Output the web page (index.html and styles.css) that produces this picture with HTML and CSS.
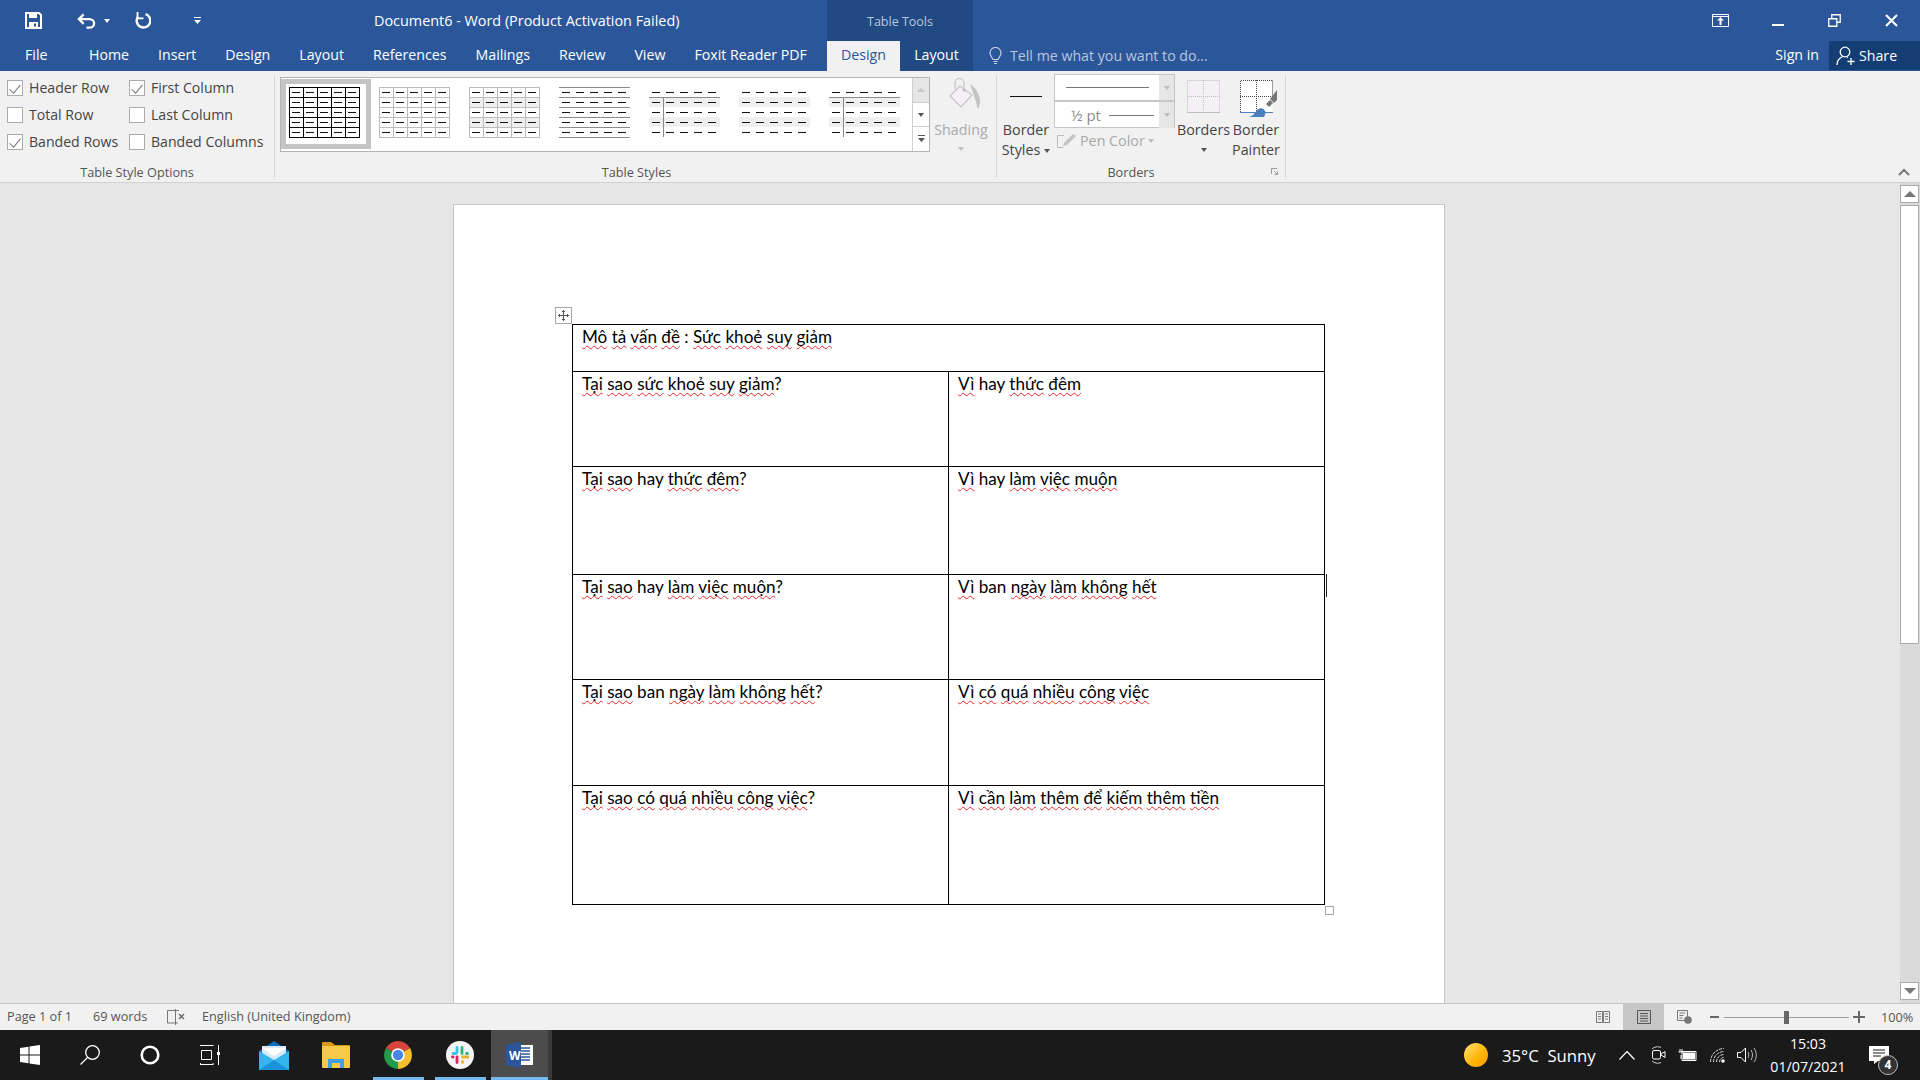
FILE: index.html
```html
<!DOCTYPE html>
<html lang="vi">
<head>
    <meta charset="UTF-8">
    <title>Document6 - Word (Product Activation Failed)</title>
    <link rel="stylesheet" href="styles.css">
</head>
<body>

    <!-- shared parts of the table style thumbnails -->
    <svg class="defs" aria-hidden="true">
        <defs>
            <pattern id="dash" width="14" height="10" patternUnits="userSpaceOnUse"><rect x="3" y="5" width="8" height="1" fill="#111"/></pattern>
            <pattern id="band" width="71" height="20" patternUnits="userSpaceOnUse"><rect y="10" width="71" height="10" fill="#efefef"/></pattern>
            <g id="dashes"><rect x="1" y="0" width="70" height="51" fill="url(#dash)"/></g>
            <g id="bands"><rect y="0" width="71" height="50" fill="url(#band)"/></g>
            <path id="gridlines" d="M.5 0v51M14.5 0v51M28.5 0v51M42.5 0v51M56.5 0v51M70.5 0v51M0 .5h71M0 10.5h71M0 20.5h71M0 30.5h71M0 40.5h71M0 50.5h71"/>
        </defs>
    </svg>

    <!-- title bar and tabs -->
    <header class="titlebar">
        <div class="title-row">
            <div class="qat">
                <svg class="qat-save" width="17" height="17" viewBox="0 0 17 17"><path d="M1 1h13l2 2v13H1z" fill="none" stroke="#fff" stroke-width="2"/><rect x="4" y="1" width="8" height="5" fill="#fff"/><rect x="4" y="10" width="9" height="6" fill="#fff"/><rect x="9" y="11.5" width="2" height="3" fill="#2b579a"/></svg>
                <svg class="qat-undo" width="19" height="16" viewBox="0 0 20 16"><path d="M3 6h10a5 4.500 0 0 1 0 9h-3" fill="none" stroke="#fff" stroke-width="2.400"/><path d="M7 1 2 6l5 5" fill="none" stroke="#fff" stroke-width="2.400"/></svg>
                <span class="caret caret-undo"></span>
                <svg class="qat-redo" width="17" height="17" viewBox="0 0 17 17"><path d="M11.500 2.200a6.800 6.800 0 1 1-7.500 2.500" fill="none" stroke="#fff" stroke-width="2.400"/><path d="M3.500 0v6.300h6" fill="none" stroke="#fff" stroke-width="1.800"/></svg>
                <svg class="qat-more" width="7" height="8" viewBox="0 0 7 8"><path d="M0 0h7v1H0zM0 3h7L3.500 7z" fill="#fff"/></svg>
            </div>
            <div class="doc-title">Document6 - Word (Product Activation Failed)</div>
            <div class="tools-label">Table Tools</div>
            <div class="window-btns">
                <span class="win-btn"><svg width="17" height="13" viewBox="0 0 17 13"><path d="M.5.500h16v12H.5zM0 2.500h17" fill="none" stroke="#fff"/><path d="M8.500 3 5 6.500h2.500V11h2V6.500H12z" fill="#fff"/></svg></span>
                <span class="win-btn"><svg width="12" height="12" viewBox="0 0 12 12"><rect y="9" width="12" height="2" fill="#fff"/></svg></span>
                <span class="win-btn"><svg width="13" height="13" viewBox="0 0 13 13"><path d="M.750 4.750h8v7.500h-8zM3.750 4.500V.750h8.500v7.500H9" fill="none" stroke="#fff" stroke-width="1.300"/></svg></span>
                <span class="win-btn"><svg width="13" height="13" viewBox="0 0 13 13"><path d="m1 1 11 11M12 1 1 12" stroke="#fff" stroke-width="2"/></svg></span>
            </div>
        </div>
        <nav class="tab-row">
            <div class="tabs-main">
                <span class="tab tab-file">File</span>
                <span class="tab">Home</span>
                <span class="tab">Insert</span>
                <span class="tab">Design</span>
                <span class="tab">Layout</span>
                <span class="tab">References</span>
                <span class="tab">Mailings</span>
                <span class="tab">Review</span>
                <span class="tab">View</span>
                <span class="tab">Foxit Reader PDF</span>
            </div>
            <span class="tab tab-active">Design</span>
            <span class="tab tab-context">Layout</span>
            <div class="tell-me">
                <svg width="13" height="18" viewBox="0 0 13 18"><path d="M4 12.500C3.500 10 1 9.500 1 6a5.500 5.500 0 0 1 11 0c0 3.500-2.500 4-3 6.500z" fill="none" stroke="#c3cfe2" stroke-width="1.200"/><path d="M4.500 14.500h4M5 16.500h3" stroke="#c3cfe2" stroke-width="1.200"/></svg>
                <span>Tell me what you want to do...</span>
            </div>
            <span class="sign-in">Sign in</span>
            <div class="share">
                <svg width="20" height="20" viewBox="0 0 20 20"><circle cx="9" cy="6" r="4.800" fill="none" stroke="#fff" stroke-width="1.300"/><path d="M1 19c0-4 2.500-7 5.500-8.500M11 11l1 .5" fill="none" stroke="#fff" stroke-width="1.300"/><path d="M15 12v7M11.500 15.500h7" stroke="#fff" stroke-width="1.300"/></svg>
                <span>Share</span>
            </div>
        </nav>
    </header>

    <!-- ribbon -->
    <section class="ribbon">
        <div class="group group-options">
            <div class="options-grid">
                <label class="check"><span class="box on"></span>Header Row</label>
                <label class="check"><span class="box on"></span>First Column</label>
                <label class="check"><span class="box"></span>Total Row</label>
                <label class="check"><span class="box"></span>Last Column</label>
                <label class="check"><span class="box on"></span>Banded Rows</label>
                <label class="check"><span class="box"></span>Banded Columns</label>
            </div>
            <div class="group-label">Table Style Options</div>
        </div>

        <div class="group group-styles">
            <div class="styles-row">
                <div class="gallery">
                    <div class="thumbs">
                        <span class="thumb thumb-selected"><svg width="71" height="51" viewBox="0 0 71 51"><use href="#gridlines" stroke="#000"/><use href="#dashes"/></svg></span>
                        <span class="thumb"><svg width="71" height="51" viewBox="0 0 71 51"><use href="#gridlines" stroke="#bcbcbc"/><use href="#dashes"/></svg></span>
                        <span class="thumb"><svg width="71" height="51" viewBox="0 0 71 51"><use href="#bands"/><use href="#gridlines" stroke="#bcbcbc"/><use href="#dashes"/></svg></span>
                        <span class="thumb"><svg width="71" height="51" viewBox="0 0 71 51"><path d="M0 .5h71M0 10.500h71M0 20.500h71M0 30.500h71M0 40.500h71M0 50.500h71" stroke="#8a8a8a"/><use href="#dashes"/></svg></span>
                        <span class="thumb"><svg width="71" height="51" viewBox="0 0 71 51"><use href="#bands"/><path d="M0 10.500h71M14.500 10v40" stroke="#8a8a8a"/><use href="#dashes"/></svg></span>
                        <span class="thumb"><svg width="71" height="51" viewBox="0 0 71 51"><use href="#bands"/><use href="#dashes"/></svg></span>
                        <span class="thumb"><svg width="71" height="51" viewBox="0 0 71 51"><use href="#bands"/><path d="M0 10.500h71M14.500 10v40" stroke="#8a8a8a"/><use href="#dashes"/></svg></span>
                    </div>
                    <div class="gallery-scroll">
                        <span class="gs-btn gs-up"><i class="tri-up"></i></span>
                        <span class="gs-btn"><i class="caret"></i></span>
                        <span class="gs-btn gs-more"><svg width="7" height="8" viewBox="0 0 7 8"><path d="M0 0h7v1H0zM0 3h7L3.500 7z" fill="#555"/></svg></span>
                    </div>
                </div>
                <div class="shading">
                    <svg class="shading-icon" width="32" height="32" viewBox="0 0 32 32"><path d="M11 9 1 19l11 11 11-12z" fill="#f5f0f6" stroke="#c4c4c4" stroke-width="1.200"/><path d="M6 12V6a4.500 4.500 0 0 1 9 0v6" fill="none" stroke="#c4c4c4" stroke-width="1.200"/><circle cx="15" cy="13" r="1.500" fill="#bbb"/><path d="M21 7c5 3 9 9 10 16 .5 3-1 8-2 8-1.500 0-1-5-3-9z" fill="#c4c4c4"/></svg>
                    <span class="btn-text muted">Shading</span>
                    <i class="caret caret-muted"></i>
                </div>
            </div>
            <div class="group-label">Table Styles</div>
        </div>

        <div class="group group-borders">
            <div class="borders-row">
                <div class="big-btn btn-styles">
                    <span class="line-sample"></span>
                    <span class="btn-text">Border</span>
                    <span class="btn-text">Styles<i class="caret caret-inline"></i></span>
                </div>
                <div class="pen-col">
                    <div class="pen-box">
                        <div class="pen-row pen-row-top">
                            <span class="pen-value"><span class="pen-line pen-line-long"></span></span>
                            <span class="pen-arrow"><i class="caret caret-muted"></i></span>
                        </div>
                        <div class="pen-row">
                            <span class="pen-value"><span class="pen-weight">½ pt</span><span class="pen-line"></span></span>
                            <span class="pen-arrow"><i class="caret caret-muted"></i></span>
                        </div>
                    </div>
                    <div class="pen-color">
                        <svg width="20" height="14" viewBox="0 0 20 14"><path d="M7 1.500H.5v12h6" fill="none" stroke="#bdbdbd"/><path d="m6 12 1-3 9-9 3 2-9 9z" fill="#c4c4c4"/></svg>
                        <span class="muted">Pen Color</span>
                        <i class="caret caret-muted"></i>
                    </div>
                </div>
                <div class="big-btn btn-borders">
                    <svg class="btn-icon" width="33" height="33" viewBox="0 0 33 33"><rect x=".5" y=".5" width="32" height="32" fill="#f5f0f6"/><path d="M.5.500h32v32H.5zM16.500 0v33M0 16.500h33" fill="none" stroke="#bdbdbd" stroke-dasharray="1 1"/><path d="M0 32.500h33" stroke="#bdbdbd"/></svg>
                    <span class="btn-text">Borders</span>
                    <i class="caret"></i>
                </div>
                <div class="big-btn btn-painter">
                    <svg class="btn-icon" width="38" height="38" viewBox="0 0 38 38"><rect x=".5" y=".5" width="32" height="32" fill="#fff"/><path d="M.5 32V.5h32M32.500 .5v18M16.500 0v32M0 16.500h33" fill="none" stroke="#444" stroke-dasharray="1 1"/><path d="M0 32.500h33" stroke="#4a80bd"/><path d="M9 37c4-1 6-4 8-7 3-3 7-2 8 1 1 3-1 6-1 6z" fill="#4a80bd"/><path d="m26 24 4-4 3 3-4 4z" fill="#777"/><path d="m30 19 7-9v10l-3 3z" fill="#777"/></svg>
                    <span class="btn-text">Border</span>
                    <span class="btn-text">Painter</span>
                </div>
            </div>
            <div class="group-label">Borders</div>
            <svg class="launcher" width="7" height="7" viewBox="0 0 7 7"><path d="M.5 6V.5H6M3 3l3.500 3.500M6.500 3.500v3h-3" fill="none" stroke="#9a9a9a"/></svg>
        </div>

        <svg class="collapse" width="12" height="8" viewBox="0 0 12 8"><path d="m1 7 5-5 5 5" fill="none" stroke="#777" stroke-width="2"/></svg>
    </section>

    <!-- document -->
    <main class="doc-area">
        <div class="canvas">
            <div class="page">
                <div class="table-wrap">
                    <span class="move-handle"><svg width="11" height="11" viewBox="0 0 11 11"><path d="M5.500 0v11M0 5.500h11M4 1.500h3M4 9.500h3M1.500 4v3M9.500 4v3" stroke="#555"/></svg></span>
                    <table class="doc-table">
                        <tr class="r0">
                            <td colspan="2"><u>Mô</u> <u>tả</u> <u>vấn</u> <u>đề</u> : <u>Sức</u> <u>khoẻ</u> <u>suy</u> <u>giảm</u></td>
                        </tr>
                        <tr class="r1">
                            <td><u>Tại</u> <u>sao</u> <u>sức</u> <u>khoẻ</u> <u>suy</u> <u>giảm</u>?</td>
                            <td><u>Vì</u> hay <u>thức</u> <u>đêm</u></td>
                        </tr>
                        <tr class="r2">
                            <td><u>Tại</u> <u>sao</u> hay <u>thức</u> <u>đêm</u>?</td>
                            <td><u>Vì</u> hay <u>làm</u> <u>việc</u> <u>muộn</u></td>
                        </tr>
                        <tr class="r3">
                            <td><u>Tại</u> <u>sao</u> hay <u>làm</u> <u>việc</u> <u>muộn</u>?</td>
                            <td><u>Vì</u> ban <u>ngày</u> <u>làm</u> <u>không</u> <u>hết</u></td>
                        </tr>
                        <tr class="r4">
                            <td><u>Tại</u> <u>sao</u> ban <u>ngày</u> <u>làm</u> <u>không</u> <u>hết</u>?</td>
                            <td><u>Vì</u> <u>có</u> <u>quá</u> <u>nhiều</u> <u>công</u> <u>việc</u></td>
                        </tr>
                        <tr class="r5">
                            <td><u>Tại</u> <u>sao</u> <u>có</u> <u>quá</u> <u>nhiều</u> <u>công</u> <u>việc</u>?</td>
                            <td><u>Vì</u> <u>cần</u> <u>làm</u> <u>thêm</u> <u>để</u> <u>kiếm</u> <u>thêm</u> <u>tiền</u></td>
                        </tr>
                    </table>
                    <span class="row-mark"></span>
                    <span class="size-handle"></span>
                </div>
            </div>
        </div>
        <div class="scrollbar">
            <span class="sb-btn"><i class="tri-up tri-dark"></i></span>
            <span class="sb-thumb"></span>
            <span class="sb-btn sb-down"><i class="tri-down"></i></span>
        </div>
    </main>

    <!-- status bar -->
    <footer class="statusbar">
        <span class="st-page">Page 1 of 1</span>
        <span class="st-words">69 words</span>
        <svg class="st-proof" width="18" height="16" viewBox="0 0 18 16"><path d="M8.500 14H.5V1.500h8zM8.500 1.500H12M8.500 14H11M8.500 0v16" fill="none" stroke="#777"/><path d="m12 5 5 5M17 5l-5 5" stroke="#666" stroke-width="1.400"/></svg>
        <span class="st-lang">English (United Kingdom)</span>
        <div class="st-right">
            <span class="view-btn view-read"><svg width="14" height="14" viewBox="0 0 14 14"><path d="M.5 1.500h6v11h-6zM7.500 1.500h6v11h-6zM2 4h3M2 6.500h3M2 9h3M9 4h3M9 6.500h3M9 9h3" fill="none" stroke="#777"/></svg></span>
            <span class="view-btn view-print"><svg width="14" height="14" viewBox="0 0 14 14"><path d="M.5.500h13v13H.5zM3 3.500h8M3 6h8M3 8.500h8M3 11h8" fill="none" stroke="#555"/></svg></span>
            <span class="view-btn view-web"><svg width="15" height="14" viewBox="0 0 15 14"><path d="M.5.500h10v10H.5zM2.500 3h6M2.500 5.500h4M2.500 8h3" fill="none" stroke="#777"/><circle cx="11" cy="10" r="3.800" fill="#777"/></svg></span>
            <span class="zoom-minus"></span>
            <span class="zoom-track"><span class="zoom-thumb"></span></span>
            <span class="zoom-plus"></span>
            <span class="zoom-value">100%</span>
        </div>
    </footer>

    <!-- windows taskbar -->
    <div class="taskbar">
        <span class="tb-slot"><svg width="20" height="20" viewBox="0 0 20 20"><path d="M0 3 8.500 1.800V9.500H0zM9.500 1.600 20 0v9.500H9.500zM0 10.500h8.500v7.700L0 17zM9.500 10.500H20V20L9.500 18.400z" fill="#fff"/></svg></span>
        <span class="tb-slot"><svg width="20" height="20" viewBox="0 0 20 20"><circle cx="12.500" cy="7.500" r="6.800" fill="none" stroke="#fff" stroke-width="1.300"/><path d="M7.500 12.500 .5 19.500" stroke="#fff" stroke-width="1.300"/></svg></span>
        <span class="tb-slot"><svg width="20" height="20" viewBox="0 0 20 20"><circle cx="10" cy="10" r="8.300" fill="none" stroke="#fff" stroke-width="2.600"/></svg></span>
        <span class="tb-slot"><svg width="20" height="20" viewBox="0 0 20 20"><path d="M.5 0v1M13 0v1M0 .5h13M1.500 5.500h10v9h-10zM0 19.500h13M.5 18v2M13 18v2M18.500 0v20" fill="none" stroke="#fff"/><rect x="17" y="7" width="3" height="3" fill="#fff"/></svg></span>
        <div class="tasks">
            <span class="task">
                <svg width="30" height="29" viewBox="0 0 30 29"><path d="M0 10 15 0l15 10v19H0z" fill="#0b6fc0"/><path d="M3 5h24v12L15 24 3 17z" fill="#d9ebf8"/><path d="M0 10 15 19l15-9v19H0z" fill="#33b5f0"/><path d="M0 29 15 19l15 10z" fill="#1a92dc"/><path d="M3 7h24L15 15z" fill="#fff"/></svg>
            </span>
            <span class="task">
                <svg width="28" height="26" viewBox="0 0 28 26"><path d="M0 1a1 1 0 0 1 1-1h8l4 3h14a1 1 0 0 1 1 1v4H0z" fill="#d99a12"/><rect y="4" width="28" height="22" rx="1" fill="#f7c948"/><path d="M6 26v-9h16v9h-4v-5h-8v5z" fill="#3f9fe0"/></svg>
            </span>
            <span class="task running">
                <svg width="28" height="28" viewBox="0 0 28 28"><path d="M14 14 1.900 7A14 14 0 0 1 26.100 7z" fill="#d8433a"/><path d="M14 14 26.100 7A14 14 0 0 1 14 28z" fill="#f5c02c"/><path d="M14 14 14 28A14 14 0 0 1 1.900 7z" fill="#239a4c"/><circle cx="14" cy="14" r="6.800" fill="#fff"/><circle cx="14" cy="14" r="5.200" fill="#4a86e8"/></svg>
            </span>
            <span class="task running">
                <svg width="28" height="28" viewBox="0 0 28 28"><circle cx="14" cy="14" r="14" fill="#f4f4f4"/><path d="M11 6.500v5M7 12.500h3" stroke="#36c5f0" stroke-width="2.800" stroke-linecap="round"/><path d="M16 6.500v6M20.500 12.500h1" stroke="#2eb67d" stroke-width="2.800" stroke-linecap="round"/><path d="M16.500 20.500v1M16.500 16h5.500" stroke="#ecb22e" stroke-width="2.800" stroke-linecap="round"/><path d="M6.500 16h.5M11 16v5.500" stroke="#e01e5a" stroke-width="2.800" stroke-linecap="round"/></svg>
            </span>
            <span class="task task-word running">
                <svg width="27" height="26" viewBox="0 0 27 26"><rect x="11" y="3" width="16" height="20" fill="#fff"/><path d="M14 6h10M14 9h10M14 12h10M14 15h10M14 18h10" stroke="#2b579a" stroke-width="1.500"/><path d="M0 3 15 0v26L0 23z" fill="#2b579a"/></svg>
                <b class="word-w">W</b>
            </span>
            <span class="task-edge"></span>
        </div>
        <div class="tray">
            <div class="tray-weather">
                <span class="sun"></span>
                <span class="weather-text">35°C&nbsp; Sunny</span>
            </div>
            <span class="tray-icon ti-chevron"><svg width="16" height="9" viewBox="0 0 16 9"><path d="m.5 8.500 7.500-8 7.500 8" fill="none" stroke="#fff" stroke-width="1.200"/></svg></span>
            <span class="tray-icon ti-meet"><svg width="15" height="18" viewBox="0 0 15 18"><rect x="1.500" y="4.500" width="8" height="8.500" rx="1.500" fill="none" stroke="#fff"/><path d="m10 8 4-2.500v6L10 9z" fill="none" stroke="#fff"/><path d="M1 3c2-2 6-3 9-1.500M1 15c2 2 6 3 9 1.500" fill="none" stroke="#fff" stroke-width=".8"/></svg></span>
            <span class="tray-icon ti-battery"><svg width="20" height="12" viewBox="0 0 20 12"><path d="M3 0v3M5 0v3M1.500 3h5M4 6v4" stroke="#fff"/><path d="M5 2.500h14v9H5z" fill="none" stroke="#fff"/><rect x="6" y="3.500" width="12" height="7" fill="#fff"/></svg></span>
            <span class="tray-icon ti-wifi"><svg width="16" height="15" viewBox="0 0 16 15"><path d="M.5 14A13.500 13.500 0 0 1 14 .5M3.500 14A10.500 10.500 0 0 1 14 3.500M6.500 14A7.500 7.500 0 0 1 14 6.500M9.500 14a4.500 4.500 0 0 1 4-4.500" fill="none" stroke="#ddd" stroke-dasharray="3 1"/><circle cx="13" cy="13" r="1.800" fill="#fff"/></svg></span>
            <span class="tray-icon ti-sound"><svg width="20" height="16" viewBox="0 0 20 16"><path d="M.5 5.500H4L8.500 1v14L4 10.500H.5z" fill="none" stroke="#fff"/><path d="M11 5c1 2 1 4 0 6M14 3c2 3 2 7 0 10M17 1c3 4 3 10 0 14" fill="none" stroke="#bbb"/></svg></span>
            <div class="clock"><span>15:03</span><span>01/07/2021</span></div>
            <span class="notify">
                <svg width="20" height="18" viewBox="0 0 20 18"><path d="M0 0h20v15H9l-4 3v-3H0z" fill="#fff"/><path d="M4 4h12M4 7h12M4 10h8" stroke="#1a1a1a"/></svg>
                <b class="notify-badge">4</b>
            </span>
        </div>
    </div>

</body>
</html>
```
FILE: styles.css
```css
* {
    box-sizing: border-box;
}
html, body {
    margin: 0;
    height: 100%;
}
body {
    width: 1920px;
    height: 1080px;
    overflow: hidden;
    display: flex;
    flex-direction: column;
    font-family: "Open Sans", sans-serif;
    font-size: 14px;
    background: #e6e6e6;
    color: #444;
}
.defs {
    position: absolute;
    width: 0;
    height: 0;
}
svg {
    display: block;
    flex: none;
}

/* title bar */
.titlebar {
    background: #2b579a;
    color: #fff;
    height: 71px;
    flex: none;
}
.title-row {
    display: flex;
    height: 41px;
}
.qat {
    width: 374px;
    display: flex;
    align-items: center;
    padding-left: 25px;
}
.qat-undo {
    margin-left: 35px;
}
.caret {
    display: block;
    width: 0;
    height: 0;
    border-left: 3.500px solid transparent;
    border-right: 3.500px solid transparent;
    border-top: 4px solid #555;
}
.caret-undo {
    border-top-color: #fff;
    margin-left: 8px;
}
.qat-redo {
    margin-left: 24px;
}
.qat-more {
    margin-left: 43px;
}
.doc-title {
    width: 453px;
    line-height: 41px;
    font-size: 14.400px;
}
.tools-label {
    width: 146px;
    background: #224a82;
    color: #b7c5dc;
    text-align: center;
    line-height: 43px;
    font-size: 12.500px;
}
.window-btns {
    margin-left: auto;
    display: flex;
}
.win-btn {
    width: 57px;
    display: flex;
    align-items: center;
    justify-content: center;
}

.tab-row {
    display: flex;
    height: 30px;
    align-items: stretch;
    font-size: 14.200px;
    line-height: 28px;
}
.tabs-main {
    width: 827px;
    flex: none;
    display: flex;
}
.tab {
    padding: 0 14.500px;
}
.tab-file {
    padding: 0 27px 0 25px;
}
.tab-active {
    width: 73px;
    padding: 0;
    text-align: center;
    background: #f1f1f1;
    color: #2b579a;
}
.tab-context {
    width: 73px;
    padding: 0;
    text-align: center;
    background: #224a82;
}
.tell-me {
    display: flex;
    align-items: center;
    gap: 8px;
    padding-left: 16px;
    color: #b9c6dc;
}
.sign-in {
    margin-left: auto;
    margin-right: 10px;
}
.share {
    width: 91px;
    height: 29px;
    background: #133d73;
    display: flex;
    align-items: center;
    gap: 3px;
    padding-left: 7px;
}

/* ribbon */
.ribbon {
    position: relative;
    flex: none;
    height: 112px;
    background: #f1f1f1;
    border-bottom: 1px solid #d2d2d2;
    display: flex;
    padding-top: 4px;
    color: #444;
}
.group {
    position: relative;
    height: 103px;
    border-right: 1px solid #d6d6d6;
    display: flex;
    flex-direction: column;
}
.group-label {
    margin-top: auto;
    margin-bottom: -3px;
    text-align: center;
    font-size: 12.700px;
    line-height: 18px;
    color: #555;
    height: 18px;
}
.group-options {
    width: 275px;
}
.options-grid {
    display: grid;
    grid-template-columns: 122px 1fr;
    grid-auto-rows: 27px;
    padding: 0 0 0 7px;
    margin-top: -1px;
}
.check {
    display: flex;
    align-items: center;
    gap: 6px;
    font-size: 14.100px;
    white-space: nowrap;
}
.box {
    position: relative;
    width: 16px;
    height: 16px;
    background: #fff;
    border: 1px solid #ababab;
}
.box.on::after {
    content: "";
    position: absolute;
    left: 4px;
    top: 1px;
    width: 5px;
    height: 10px;
    border: solid #777;
    border-width: 0 1.500px 1.500px 0;
    transform: rotate(40deg);
}

.group-styles {
    width: 722px;
    padding-left: 5px;
}
.group-styles .group-label {
    padding-right: 3px;
}
.styles-row {
    display: flex;
    height: 81px;
    padding-top: 2px;
}
.gallery {
    width: 650px;
    height: 75px;
    background: #fff;
    border: 1px solid #b4b4b4;
    display: flex;
    flex: none;
}
.thumbs {
    flex: 1;
    display: flex;
    padding: 1px 0 0 0;
}
.thumb {
    width: 90px;
    height: 70px;
    padding: 8px 0 0 8px;
    flex: none;
}
.thumb-selected {
    background: #fff;
    border: 5px solid #c4c4c4;
    padding: 3px 0 0 3px;
    width: 90px;
    margin-right: 0;
}
.gallery-scroll {
    width: 17px;
    flex: none;
    display: flex;
    flex-direction: column;
    border-left: 1px solid #cfcfcf;
}
.gs-btn {
    display: flex;
    flex: 1;
    align-items: center;
    justify-content: center;
    border-bottom: 1px solid #cfcfcf;
}
.gs-btn:last-child {
    border-bottom: 0;
}
.gs-up {
    background: #e6e6e6;
}
.tri-up {
    display: block;
    width: 0;
    height: 0;
    border-left: 4px solid transparent;
    border-right: 4px solid transparent;
    border-bottom: 4px solid #c4c4c4;
}
.tri-dark {
    border-left-width: 6px;
    border-right-width: 6px;
    border-bottom: 6px solid #777;
}
.tri-down {
    display: block;
    width: 0;
    height: 0;
    border-left: 6px solid transparent;
    border-right: 6px solid transparent;
    border-top: 6px solid #777;
}
.shading {
    display: flex;
    flex-direction: column;
    align-items: center;
    width: 62px;
    padding-top: 0;
}
.shading-icon {
    margin-left: 8px;
}
.btn-text {
    font-size: 14.300px;
    line-height: 20px;
    white-space: nowrap;
}
.muted {
    color: #a9a9a9;
}
.shading .btn-text {
    margin-top: 11px;
}
.caret-muted {
    border-top-color: #bdbdbd;
}
.shading .caret {
    margin-top: 7px;
}

.group-borders {
    width: 289px;
}
.group-borders .group-label {
    padding-right: 20px;
}
.borders-row {
    display: flex;
    height: 81px;
    flex: none;
}
.big-btn {
    display: flex;
    flex-direction: column;
    align-items: center;
}
.big-btn > * {
    flex: none;
}
.btn-styles {
    width: 57px;
    padding-left: 1px;
}
.line-sample {
    width: 32px;
    height: 1px;
    background: #111;
    margin: 21px 0 23px;
}
.caret-inline {
    display: inline-block;
    margin-left: 4px;
    vertical-align: middle;
}
.pen-col {
    width: 121px;
    flex: none;
}
.pen-box {
    height: 54px;
    margin-top: -1px;
    border: 1px solid #c6c6c6;
    background: #fff;
}
.pen-row {
    display: flex;
    height: 26px;
}
.pen-row-top {
    border-bottom: 2px solid #c6c6c6;
    height: 27px;
}
.pen-value {
    flex: 1;
    display: flex;
    align-items: center;
    padding-left: 11px;
    gap: 6px;
}
.pen-arrow {
    width: 15px;
    background: #e6e6e6;
    display: flex;
    align-items: center;
    justify-content: center;
}
.pen-line {
    display: block;
    width: 45px;
    height: 1px;
    background: #777;
}
.pen-line-long {
    width: 83px;
}
.pen-weight {
    color: #8c8c8c;
    font-size: 15px;
    width: 32px;
    margin-left: 5px;
    white-space: nowrap;
}
.pen-color {
    display: flex;
    align-items: center;
    gap: 3px;
    padding: 3px 0 0 3px;
    font-size: 14.300px;
}
.btn-borders {
    width: 56px;
    padding: 5px 0 0 1px;
}
.btn-borders .btn-text {
    margin-top: 7px;
}
.btn-borders .caret {
    margin-top: 8px;
}
.btn-painter {
    width: 50px;
    padding-top: 5px;
}
.btn-painter .btn-icon {
    margin: 0 -3px 2px 3px;
}
.launcher {
    position: absolute;
    right: 7px;
    bottom: 3px;
}
.collapse {
    position: absolute;
    right: 10px;
    bottom: 6px;
}

/* document */
.doc-area {
    flex: 1;
    min-height: 0;
    display: flex;
}
.canvas {
    flex: 1;
    overflow: hidden;
    padding: 21px 0 0 453px;
}
.page {
    width: 992px;
    height: 900px;
    background: #fff;
    border: 1px solid #c6c6c6;
    padding: 119px 0 0 118px;
}
.table-wrap {
    position: relative;
    width: 753px;
}
.doc-table {
    width: 753px;
    table-layout: fixed;
    border-collapse: collapse;
    font-family: Lato, "Noto Sans", sans-serif;
    font-size: 17.100px;
    color: #000;
}
.doc-table td {
    border: 1px solid #000;
    padding: 0 8px 0 9px;
    vertical-align: top;
    line-height: 24px;
    white-space: nowrap;
}
.doc-table u {
    text-decoration: underline wavy #e8262a 1.400px;
    text-decoration-skip-ink: none;
    text-underline-offset: 2px;
}
.r0 { height: 47px; }
.r1 { height: 95px; }
.r2 { height: 108px; }
.r3 { height: 105px; }
.r4 { height: 106px; }
.r5 { height: 119px; }
.move-handle {
    position: absolute;
    left: -17px;
    top: -17px;
    width: 17px;
    height: 17px;
    background: #fff;
    border: 1px solid #a6a6a6;
    display: flex;
    align-items: center;
    justify-content: center;
}
.row-mark {
    position: absolute;
    left: 754px;
    top: 250px;
    width: 1px;
    height: 23px;
    background: #222;
}
.size-handle {
    position: absolute;
    left: 753px;
    top: 582px;
    width: 9px;
    height: 9px;
    background: #fff;
    border: 1px solid #a6a6a6;
}
.scrollbar {
    width: 20px;
    flex: none;
    background: #dadada;
    display: flex;
    flex-direction: column;
    padding: 2px 1px 3px 0;
    gap: 2px;
}
.sb-btn {
    height: 18px;
    flex: none;
    background: #fff;
    border: 1px solid #ababab;
    display: flex;
    align-items: center;
    justify-content: center;
}
.sb-thumb {
    height: 439px;
    flex: none;
    background: #fff;
    border: 1px solid #ababab;
}
.sb-down {
    margin-top: auto;
}

/* status bar */
.statusbar {
    flex: none;
    height: 27px;
    background: #f1f1f1;
    border-top: 1px solid #c6c6c6;
    display: flex;
    align-items: center;
    font-size: 12.700px;
    line-height: 22px;
    color: #555;
    padding-left: 7px;
}
.statusbar > span {
    margin-bottom: 2px;
}
.st-page {
    width: 86px;
}
.st-words {
    width: 74px;
}
.st-proof {
    margin-right: 17px;
}
.st-right {
    margin-left: auto;
    display: flex;
    align-items: center;
    height: 100%;
}
.view-btn {
    display: flex;
    align-items: center;
    justify-content: center;
    height: 100%;
}
.view-read {
    width: 41px;
}
.view-print {
    width: 41px;
    background: #c6c6c6;
}
.view-web {
    width: 41px;
    margin-right: 5px;
}
.zoom-minus {
    width: 9px;
    height: 2px;
    background: #666;
    margin-right: 5px;
}
.zoom-track {
    position: relative;
    width: 125px;
    height: 1px;
    background: #9a9a9a;
    display: block;
}
.zoom-thumb {
    position: absolute;
    left: 60px;
    top: -6px;
    width: 5px;
    height: 13px;
    background: #666;
}
.zoom-plus {
    position: relative;
    width: 12px;
    height: 2px;
    background: #666;
    margin: 0 16px 0 4px;
}
.zoom-plus::after {
    content: "";
    position: absolute;
    left: 5px;
    top: -5px;
    width: 2px;
    height: 12px;
    background: #666;
}
.zoom-value {
    width: 39px;
}

/* taskbar */
.taskbar {
    flex: none;
    height: 50px;
    background: #1a1a1a;
    display: flex;
    align-items: center;
    color: #fff;
}
.tb-slot {
    width: 60px;
    height: 100%;
    display: flex;
    align-items: center;
    justify-content: center;
}
.tasks {
    display: flex;
    height: 100%;
    padding-left: 3px;
}
.task {
    position: relative;
    width: 62px;
    height: 100%;
    display: flex;
    align-items: center;
    justify-content: center;
}
.task.running::after {
    content: "";
    position: absolute;
    left: 6px;
    right: 5px;
    bottom: 0;
    height: 3px;
    background: #76b9ed;
}
.task-word {
    width: 57px;
    background: #4c4c4c;
}
.task-word.running::after {
    left: 0;
    right: 0;
}
.task-edge {
    width: 4px;
    background: #3a3a3a;
}
.word-w {
    position: absolute;
    left: 18px;
    top: 19px;
    font: bold 12px/13px "Open Sans", sans-serif;
    color: #fff;
}
.tray {
    margin-left: auto;
    width: 456px;
    display: flex;
    align-items: center;
    height: 100%;
}
.tray-weather {
    width: 155px;
    display: flex;
    align-items: center;
    gap: 14px;
}
.sun {
    width: 24px;
    height: 24px;
    border-radius: 50%;
    background: linear-gradient(135deg, #ffe27a, #ffb300 60%, #f59a00);
}
.weather-text {
    font-size: 16.700px;
    white-space: nowrap;
}
.tray-icon {
    display: block;
    flex: none;
}
.ti-chevron { width: 32px; }
.ti-meet { width: 26px; }
.ti-battery { width: 33px; }
.ti-wifi { width: 27px; }
.ti-sound { width: 33px; }
.clock {
    width: 76px;
    display: flex;
    flex-direction: column;
    align-items: center;
    font-size: 14.200px;
    line-height: 23px;
    white-space: nowrap;
}
.notify {
    position: relative;
    margin-left: 23px;
    width: 51px;
}
.notify-badge {
    position: absolute;
    left: 9px;
    top: 9px;
    width: 20px;
    height: 20px;
    border-radius: 50%;
    background: #333;
    border: 1px solid #bbb;
    text-align: center;
    font-size: 12px;
    line-height: 18px;
}
```
